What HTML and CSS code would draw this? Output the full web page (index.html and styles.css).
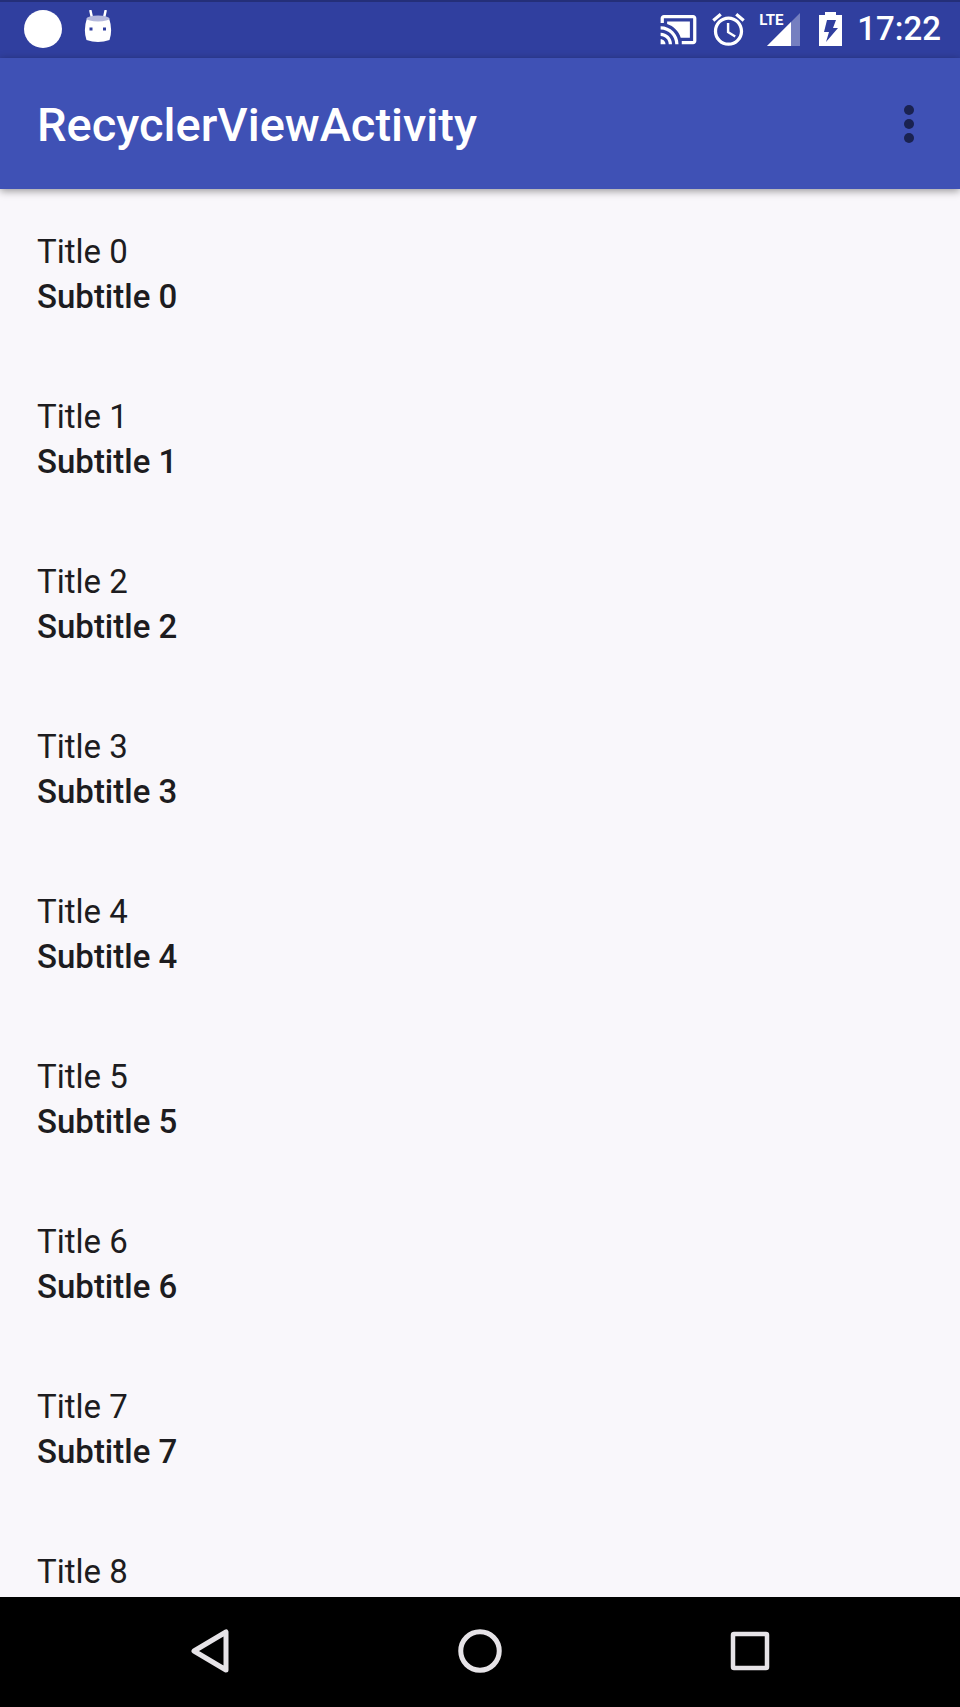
FILE: index.html
```html
<!DOCTYPE html>
<html lang="en">
<head>
<meta charset="utf-8">
<meta name="viewport" content="width=device-width, initial-scale=1">
<title>RecyclerViewActivity</title>
<link rel="stylesheet" href="styles.css">
</head>
<body>
<div class="screen">
  <div class="status-bar">
    <div class="status-group notifications">
      <svg width="38" height="38" viewBox="0 0 38 38" aria-hidden="true"><circle cx="19" cy="19" r="19" fill="#fff"/></svg>
      <svg width="28" height="34" viewBox="0 0 28 34" aria-hidden="true">
        <path d="M6.500 1l1.500 7M21.500 1l-1.500 7" stroke="#fff" stroke-width="2.500" stroke-linecap="round"/>
        <path d="M3 8Q14 12 25 8Q29 20 25.500 30Q14 34 2.500 30Q-1 20 3 8Z" fill="#fff"/>
        <ellipse cx="14" cy="8.500" rx="11.500" ry="3" fill="#b4b9dc"/>
        <path d="M5.500 17.500h3v3h-3zM19 17.500h3v3h-3z" fill="#303f9f"/>
      </svg>
    </div>
    <div class="status-group system">
      <svg width="39" height="39" viewBox="0 0 24 24" fill="#fff" aria-hidden="true"><path d="M1 18v3h3c0-1.660-1.340-3-3-3zm0-4v2c2.760 0 5 2.240 5 5h2c0-3.870-3.130-7-7-7zm18-7H5v1.630c3.960 1.280 7.090 4.410 8.370 8.370H19V7zM1 10v2c4.970 0 9 4.030 9 9h2c0-6.080-4.930-11-11-11zm20-7H3c-1.100 0-2 .9-2 2v3h2V5h18v14h-7v2h7c1.100 0 2-.9 2-2V5c0-1.100-.9-2-2-2z"/></svg>
      <svg width="39" height="39" viewBox="0 0 24 24" fill="#fff" aria-hidden="true"><path d="M22 5.720l-4.600-3.860-1.290 1.530 4.600 3.860L22 5.720zM7.880 3.390L6.600 1.860 2 5.710l1.290 1.530 4.590-3.850zM12.500 8H11v6l4.750 2.850.75-1.230-4-2.370V8zM12 4c-4.970 0-9 4.030-9 9s4.020 9 9 9c4.970 0 9-4.030 9-9s-4.030-9-9-9zm0 16c-3.870 0-7-3.130-7-7s3.130-7 7-7 7 3.130 7 7-3.130 7-7 7z"/></svg>
      <div class="signal">
        <span class="signal-type">LTE</span>
        <svg width="33" height="33" viewBox="0 0 33 33" aria-hidden="true"><path d="M33 0V33H0Z" fill="#757fc0"/><path d="M24 9V33H0Z" fill="#fff"/></svg>
      </div>
      <svg class="battery" width="23" height="34" viewBox="0 0 23 34" aria-hidden="true"><path fill="#fff" fill-rule="evenodd" d="M6 0H17V3H23V34H0V3H6ZM8 8H17L14 16H19L7 30L10 20H5Z"/></svg>
      <time class="clock">17:22</time>
    </div>
  </div>
  <header class="app-bar">
    <h1 class="app-title">RecyclerViewActivity</h1>
    <button class="menu-button" type="button" aria-label="More options">
      <svg width="10" height="38" viewBox="0 0 10 38" fill="#1a2250" aria-hidden="true"><circle cx="5" cy="5" r="5"/><circle cx="5" cy="19" r="5"/><circle cx="5" cy="33" r="5"/></svg>
    </button>
  </header>
  <main class="content">
    <ul class="list">
      <li class="row"><div class="title">Title 0</div><div class="subtitle">Subtitle 0</div></li>
      <li class="row"><div class="title">Title 1</div><div class="subtitle">Subtitle 1</div></li>
      <li class="row"><div class="title">Title 2</div><div class="subtitle">Subtitle 2</div></li>
      <li class="row"><div class="title">Title 3</div><div class="subtitle">Subtitle 3</div></li>
      <li class="row"><div class="title">Title 4</div><div class="subtitle">Subtitle 4</div></li>
      <li class="row"><div class="title">Title 5</div><div class="subtitle">Subtitle 5</div></li>
      <li class="row"><div class="title">Title 6</div><div class="subtitle">Subtitle 6</div></li>
      <li class="row"><div class="title">Title 7</div><div class="subtitle">Subtitle 7</div></li>
      <li class="row"><div class="title">Title 8</div></li>
    </ul>
  </main>
  <nav class="nav-bar" aria-label="System navigation">
    <button class="nav-button" type="button" aria-label="Back">
      <svg width="38" height="44" viewBox="0 0 38 44" aria-hidden="true"><path d="M35 3V41L3 22Z" fill="none" stroke="#e6e3e7" stroke-width="5" stroke-linejoin="round"/></svg>
    </button>
    <button class="nav-button" type="button" aria-label="Home">
      <svg width="44" height="44" viewBox="0 0 44 44" aria-hidden="true"><circle cx="22" cy="22" r="19.250" fill="none" stroke="#e6e3e7" stroke-width="5"/></svg>
    </button>
    <button class="nav-button" type="button" aria-label="Recent apps">
      <svg width="40" height="40" viewBox="0 0 40 40" aria-hidden="true"><rect x="3" y="3" width="34" height="34" rx="1" fill="none" stroke="#e6e3e7" stroke-width="4.500" stroke-linejoin="round"/></svg>
    </button>
  </nav>
</div>
</body>
</html>
```

FILE: styles.css
```css
* {
  box-sizing: border-box;
}

body {
  margin: 0;
  font-family: Roboto, "Liberation Sans", sans-serif;
}

svg {
  display: block;
  flex: none;
}

button {
  display: flex;
  align-items: center;
  justify-content: center;
  margin: 0;
  padding: 0;
  border: 0;
  background: none;
  cursor: pointer;
}

.screen {
  display: flex;
  flex-direction: column;
  height: 100vh;
  background: #f9f7fb;
}

.status-bar {
  display: flex;
  flex: none;
  align-items: center;
  justify-content: space-between;
  height: 58px;
  padding: 0 19px 2px 24px;
  border-top: 2px solid #242f79;
  background: #303f9f;
  color: #fff;
}

.status-group {
  display: flex;
  align-items: center;
}

.notifications {
  gap: 22px;
  align-items: flex-start;
}

.system {
  gap: 11px;
}

.signal {
  position: relative;
  padding-left: 8px;
}

.signal-type {
  position: absolute;
  top: 0;
  left: 0;
  font-size: 15px;
  font-weight: 700;
  line-height: 15px;
}

.battery {
  margin: 0 4px 0 8px;
}

.clock {
  font-size: 33px;
  font-weight: 500;
  line-height: 40px;
}

.app-bar {
  z-index: 1;
  display: flex;
  flex: none;
  align-items: center;
  justify-content: space-between;
  height: 131px;
  padding: 0 29px 0 37px;
  background: #3f51b5;
  box-shadow: 0 2px 8px rgba(0, 0, 0, 0.4);
}

.app-title {
  margin: 0;
  padding-top: 3px;
  color: #fff;
  font-size: 47px;
  font-weight: 500;
  line-height: 56px;
}

.menu-button {
  width: 44px;
  height: 64px;
}

.content {
  flex: 1;
  min-height: 0;
  overflow: hidden;
}

.list {
  margin: 0;
  padding: 4px 0 0;
  list-style: none;
}

.row {
  padding: 36px 37px 39px;
  color: #1d1c20;
  font-size: 33px;
  line-height: 45px;
}

.subtitle {
  font-weight: 500;
}

.nav-bar {
  display: flex;
  flex: none;
  height: 110px;
  padding: 0 75px 2px;
  background: #000;
}

.nav-button {
  flex: 1;
}
```
